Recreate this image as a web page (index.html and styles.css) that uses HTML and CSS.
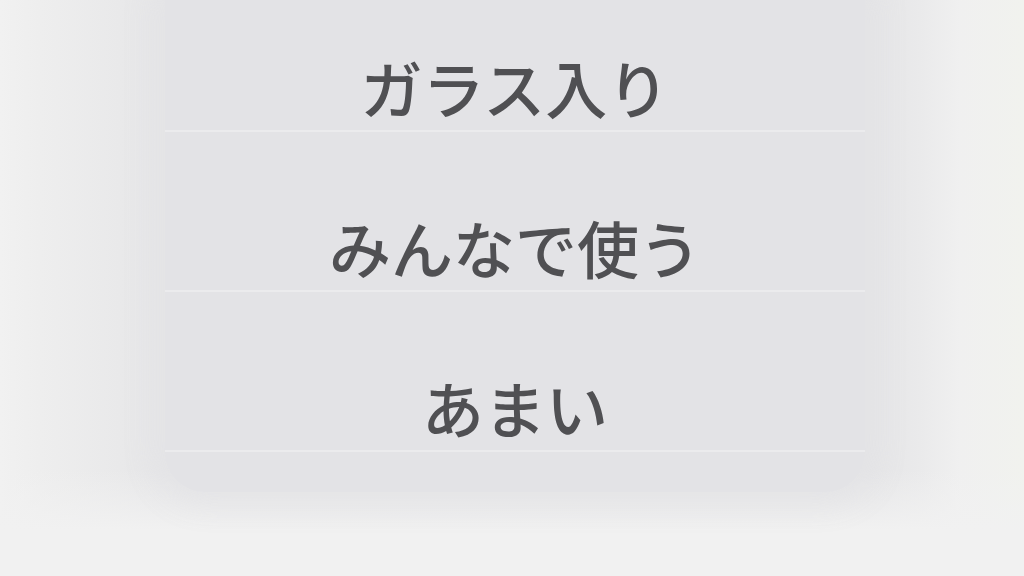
FILE: index.html
```html
<!DOCTYPE html>
<html lang="ja">
<head>
<meta charset="utf-8">
<link rel="stylesheet" href="styles.css">
</head>
<body>
<div class="stage">
  <div class="panel">
    <ul class="list">
      <li class="item">ガラス入り</li>
      <li class="item">みんなで使う</li>
      <li class="item">あまい</li>
    </ul>
  </div>
</div>
</body>
</html>
```
FILE: styles.css
```css
html, body {
  margin: 0;
  padding: 0;
  width: 1024px;
  height: 576px;
  overflow: hidden;
}
body {
  background: linear-gradient(90deg, #f1f1f1 0px, #eeeeee 40px, #e9e9ea 120px, #e6e6e8 160px, #e5e5e7 870px, #eaeaeb 920px, #f0f0f0 960px, #f1f2ee 1024px);
  font-family: "Noto Sans CJK JP", "Noto Sans", sans-serif;
}
.stage {
  height: 576px;
  background: linear-gradient(180deg, rgba(241,241,241,0) 0px, rgba(241,241,241,0) 470px, rgba(241,241,241,1) 530px);
  display: flex;
  justify-content: center;
  padding-left: 6px;
  box-sizing: border-box;
}
.panel {
  width: 700px;
  height: 492px;
  background: #e3e3e6;
  border-radius: 0 0 40px 40px;
  box-shadow: 0 0 30px 12px rgba(227,227,230,0.9);
}
.list {
  list-style: none;
  margin: 0;
  padding: 0;
}
.item {
  height: 60px;
  line-height: 60px;
  font-size: 62px;
  font-weight: 500;
  color: #505053;
  text-align: center;
  padding: 85px 0 13px;
  border-bottom: 2px solid #ebebed;
}
.item:first-child {
  padding-top: 57px;
}
```
